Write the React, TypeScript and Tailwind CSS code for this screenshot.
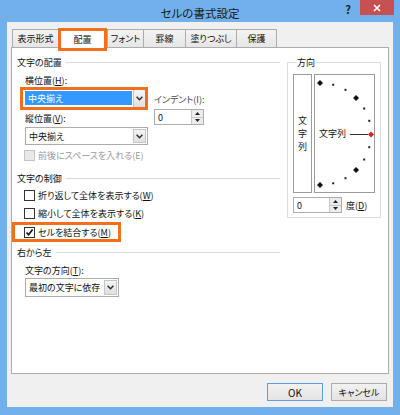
import React from 'react';

function Chevron() {
  return (
    <svg width="7" height="5" viewBox="0 0 7 5">
      <path d="M0.6 0.8 L3.5 3.8 L6.4 0.8" fill="none" stroke="#2b2b2b" strokeWidth="1.4" />
    </svg>
  );
}

function Tab({ label, className }: { label: string; className: string }) {
  return (
    <div
      className={`h-[18px] flex items-center justify-center border-t border-l border-[#acacac] bg-linear-to-b from-[#f3f3f3] to-[#e6e6e6] ${className}`}
    >
      {label}
    </div>
  );
}

function Combo({ value, className }: { value: string; className: string }) {
  return (
    <div className={`flex border border-[#acacac] bg-white ${className}`}>
      <div className="flex-1 min-w-0 flex items-center pl-[3px] whitespace-nowrap overflow-hidden">{value}</div>
      <div className="w-[13px] shrink-0 m-px flex items-center justify-center border border-[#c5c5c5] bg-linear-to-b from-[#f4f4f4] to-[#e0e0e0]">
        <Chevron />
      </div>
    </div>
  );
}

function Spin({ className }: { className: string }) {
  return (
    <div className={`flex h-[16px] border border-[#abadb3] bg-white ${className}`}>
      <div className="flex-1 pl-[3px] flex items-center">0</div>
      <div className="w-[12px] flex flex-col border-l border-[#c8c8c8]">
        <div className="flex-1 flex items-center justify-center bg-[#ececec] border-b border-[#c8c8c8]">
          <svg width="5" height="3" viewBox="0 0 5 3">
            <path d="M0 3 L2.5 0 L5 3Z" fill="#222" />
          </svg>
        </div>
        <div className="flex-1 flex items-center justify-center bg-[#ececec]">
          <svg width="5" height="3" viewBox="0 0 5 3">
            <path d="M0 0 L2.5 3 L5 0Z" fill="#222" />
          </svg>
        </div>
      </div>
    </div>
  );
}

function Check({ checked, disabled }: { checked?: boolean; disabled?: boolean }) {
  return (
    <span
      className={`w-[11px] h-[11px] border flex items-center justify-center shrink-0 ${
        disabled ? 'border-[#c4c4c4] bg-[#e8e8e8]' : 'border-[#333333] bg-white'
      }`}
    >
      {checked && (
        <svg width="9" height="9" viewBox="0 0 9 9">
          <path d="M1.5 4.5 L3.6 6.8 L7.6 1.6" fill="none" stroke="#111" strokeWidth="1.7" />
        </svg>
      )}
    </span>
  );
}

function Section({ title, className }: { title: string; className: string }) {
  return (
    <div className={`flex items-center h-[13px] ${className}`}>
      <span>{title}</span>
      <div className="flex-1 h-px bg-[#d9d9d9] ml-[4px]" />
    </div>
  );
}

function Dial() {
  const cx = 5;
  const cy = 59;
  const r = 51;
  const angles = [90, 75, 60, 45, 30, 15, -15, -30, -45, -60, -75, -90];
  return (
    <div className="relative w-[61px] h-[119px] border border-[#9c9c9c] bg-white">
      <svg className="absolute inset-0" width="59" height="117" viewBox="0 0 59 117">
        {angles.map((a) => {
          const x = cx + r * Math.cos((a * Math.PI) / 180);
          const y = cy - r * Math.sin((a * Math.PI) / 180);
          const big = a % 45 === 0;
          return big ? (
            <polygon key={a} points={`${x},${y - 3} ${x + 3},${y} ${x},${y + 3} ${x - 3},${y}`} fill="#111" />
          ) : (
            <rect key={a} x={x - 1} y={y - 1} width="2" height="2" fill="#222" />
          );
        })}
        <line x1="35" y1="59.5" x2="53" y2="59.5" stroke="#333" strokeWidth="1" />
        <polygon points="56,56.5 59,59.5 56,62.5 53,59.5" fill="#e02020" />
      </svg>
      <div className="relative h-full flex items-center pl-[4px]">文字列</div>
    </div>
  );
}

export default function App() {
  return (
    <div className="w-[400px] h-[415px] overflow-hidden bg-[#71b0ea] flex flex-col text-[9px] leading-[13px] text-[#111] whitespace-nowrap [font-family:'Noto_Sans_CJK_JP',sans-serif] [font-feature-settings:'palt']">
      {/* Title bar */}
      <div className="h-[22px] shrink-0 grid grid-cols-[1fr_auto_1fr] items-start">
        <div />
        <div className="text-[11.5px] leading-[16px] pt-[5px] text-[#1a1a1a]">セルの書式設定</div>
        <div className="flex justify-end items-start pr-[6px]">
          <span className="mt-[2px] mr-[9px] text-[11px] leading-[14px] font-bold text-[#222]">?</span>
          <div className="w-[34px] h-[15px] bg-[#c75050] flex items-center justify-center">
            <svg width="8" height="8" viewBox="0 0 8 8">
              <path d="M1 1 L7 7 M7 1 L1 7" stroke="#fff" strokeWidth="1.6" />
            </svg>
          </div>
        </div>
      </div>

      {/* Client area */}
      <div className="ml-[7px] w-[386px] h-[385px] bg-[#f0f0f0] px-[4px] pt-[5px] flex flex-col">
        {/* Tabs */}
        <div className="h-[20px] flex items-end pl-[1px]">
          <Tab label="表示形式" className="w-[46px]" />
          <div className="relative z-10 w-[49px] h-[23px] -mb-[4px] border-[3px] border-[#f0701e] bg-white flex items-center justify-center">
            配置
          </div>
          <Tab label="フォント" className="w-[36px]" />
          <Tab label="罫線" className="w-[42px]" />
          <Tab label="塗りつぶし" className="w-[51px]" />
          <Tab label="保護" className="w-[41px] border-r" />
        </div>

        {/* Panel */}
        <div className="w-[378px] h-[327px] border border-[#acacac] bg-white flex pl-[5px] pt-[8px]">
          {/* Left column */}
          <div className="w-[263px] flex flex-col">
            <Section title="文字の配置" className="" />
            <div className="flex mt-[5px]">
              <div className="w-[131px] flex flex-col">
                <div className="ml-[8px] h-[13px]">
                  横位置(<u>H</u>):
                </div>
                <div className="ml-[3px] w-[128px] h-[23px] border-[3px] border-[#f0701e] bg-white flex">
                  <div className="flex-1 pl-[2px] pt-px">
                    <div className="h-[14px] bg-[#3399ff] text-white pl-[3px] flex items-center">中央揃え</div>
                  </div>
                  <div className="w-[12px] ml-px flex items-center justify-center border-l border-[#c5c5c5] bg-linear-to-b from-[#f4f4f4] to-[#e0e0e0]">
                    <Chevron />
                  </div>
                </div>
                <div className="ml-[8px] mt-[2px] h-[13px]">
                  縦位置(<u>V</u>):
                </div>
                <Combo value="中央揃え" className="ml-[8px] mt-[2px] w-[123px] h-[18px]" />
              </div>
              <div className="ml-[6px] mt-[19px] flex flex-col">
                <div className="h-[13px] text-[#444]">インデント(I):</div>
                <Spin className="mt-[3px] w-[50px]" />
              </div>
            </div>

            <div className="flex items-center mt-[4px] ml-[7px] h-[13px] text-[#9a9a9a]">
              <Check disabled />
              <span className="ml-[3px]">前後にスペースを入れる(E)</span>
            </div>

            <Section title="文字の制御" className="mt-[10px]" />
            <div className="flex items-center mt-[4px] ml-[7px] h-[13px]">
              <Check />
              <span className="ml-[3px]">
                折り返して全体を表示する(<u>W</u>)
              </span>
            </div>
            <div className="flex items-center mt-[5px] ml-[7px] h-[13px]">
              <Check />
              <span className="ml-[3px]">
                縮小して全体を表示する(<u>K</u>)
              </span>
            </div>
            <div className="flex items-center mt-[2px] -ml-[5px] w-[109px] h-[20px] border-[3px] border-[#f0701e] pl-[9px]">
              <Check checked />
              <span className="ml-[3px]">
                セルを結合する(<u>M</u>)
              </span>
            </div>

            <Section title="右から左" className="mt-[4px]" />
            <div className="ml-[8px] mt-[5px] h-[13px]">
              文字の方向(<u>T</u>):
            </div>
            <Combo value="最初の文字に依存" className="ml-[8px] mt-[1px] w-[94px] h-[19px]" />
          </div>

          {/* Right column: orientation */}
          <fieldset className="ml-[7px] w-[94px] self-start border border-[#dcdcdc] pl-[5px] pb-[4px]">
            <legend className="ml-[3px] px-px">方向</legend>
            <div className="flex gap-[2px] mt-[5px]">
              <div className="w-[19px] h-[119px] border border-[#9c9c9c] bg-white flex flex-col items-center justify-center">
                <span>文</span>
                <span>字</span>
                <span>列</span>
              </div>
              <Dial />
            </div>
            <div className="flex items-center mt-[4px]">
              <Spin className="w-[49px]" />
              <span className="ml-[4px]">
                度(<u>D</u>)
              </span>
            </div>
          </fieldset>
        </div>

        {/* Buttons */}
        <div className="flex justify-end gap-[8px] mt-[9px] pr-[2px]">
          <div className="w-[56px] h-[18px] border border-[#5c9ee0] bg-linear-to-b from-[#f2f2f2] to-[#e3e3e3] flex items-center justify-center text-[10px]">
            OK
          </div>
          <div className="w-[56px] h-[18px] border border-[#acacac] bg-linear-to-b from-[#f2f2f2] to-[#e3e3e3] flex items-center justify-center">
            キャンセル
          </div>
        </div>
      </div>
    </div>
  );
}
